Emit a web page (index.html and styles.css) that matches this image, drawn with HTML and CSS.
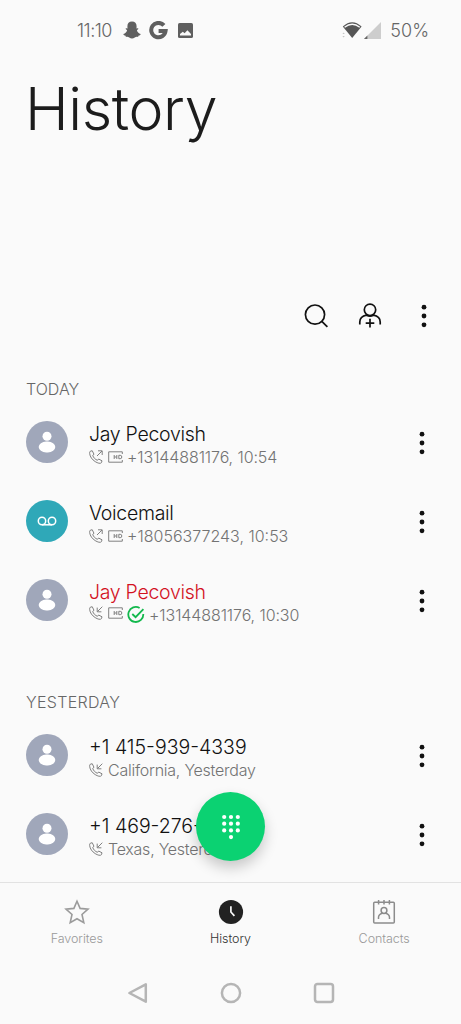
FILE: index.html
```html
<!DOCTYPE html>
<html lang="en">
<head>
    <meta charset="UTF-8">
    <meta name="viewport" content="width=device-width, initial-scale=1.0">
    <title>History</title>
    <link rel="stylesheet" href="styles.css">
</head>
<body>

    <!-- shared icons -->
    <svg class="sprite" width="0" height="0">
        <symbol id="person" viewBox="0 0 42 42">
            <circle cx="21" cy="15.3" r="4.5" fill="#fff"/>
            <rect x="12.7" y="20.6" width="16.6" height="10.8" rx="7.5" ry="5.4" fill="#fff"/>
        </symbol>
        <symbol id="dots" viewBox="0 0 6 24">
            <circle cx="3" cy="3.2" r="2.4"/>
            <circle cx="3" cy="12" r="2.4"/>
            <circle cx="3" cy="20.8" r="2.4"/>
        </symbol>
        <symbol id="handset" viewBox="0 0 14 14">
            <path d="M1.2 1.3 L3.2 .7 L5 4.3 L3.7 5.4 C4.4 7.6 6.2 9.5 8.5 10.3 L9.6 9 L13 10.8 L12.5 12.6 C11.5 14 8.7 13.2 6.2 11.6 C3.1 9.6 1 6.7 .7 3.7 C.5 2.5 .7 1.7 1.2 1.3 Z"/>
        </symbol>
        <symbol id="call-out" viewBox="0 0 14 14">
            <use href="#handset"/>
            <path d="M8 6 L13 1 M9 .8 H13.2 V5"/>
        </symbol>
        <symbol id="call-in" viewBox="0 0 14 14">
            <use href="#handset"/>
            <path d="M13.3 .7 L8.4 5.6 M8.2 1.6 V5.8 H12.4"/>
        </symbol>
        <symbol id="hd" viewBox="0 0 15 12">
            <path d="M14.3 3 V.8 H.7 V11.2 H14.3 V9"/>
            <path d="M6.2 4 V8 M8.8 4 V8 M6.2 6 H8.8 M10.8 4.3 V7.7 H12.2 Q13.8 7.7 13.8 6 Q13.8 4.3 12.2 4.3 Z"/>
        </symbol>
    </svg>

    <div class="screen">
        <div class="status-bar">
            <div class="status-left">
                <span class="clock">11:10</span>
                <svg class="snap" width="18" height="18" viewBox="0 0 18 18">
                    <path d="M9 .6 C12 .6 13.6 2.6 13.6 5.2 L13.5 7.4 C14 7.7 14.7 7.1 15.1 7.3 C16 7.9 14.6 8.7 13.9 9.1 C14.2 11.1 15.7 12.6 17.6 13.1 C17.9 14 16.8 14.5 15.4 14.8 L15.1 15.9 C13.6 15.6 12.8 15.7 11.8 16.4 C10 17.7 8 17.7 6.2 16.4 C5.2 15.7 4.4 15.6 2.9 15.9 L2.6 14.8 C1.2 14.5 .1 14 .4 13.1 C2.3 12.6 3.8 11.1 4.1 9.1 C3.4 8.7 2 7.9 2.9 7.3 C3.3 7.1 4 7.7 4.5 7.4 L4.4 5.2 C4.4 2.6 6 .6 9 .6 Z"/>
                </svg>
                <svg class="google" width="19" height="19" viewBox="0 0 19 19">
                    <path d="M14.9 4.4 A7.2 7.2 0 1 0 16.6 9.9 H9.6" fill="none" stroke="#5f5f5f" stroke-width="4"/>
                </svg>
                <svg class="photo" width="15" height="15" viewBox="0 0 15 15">
                    <rect width="15" height="15" rx="1.6"/>
                    <path d="M2 12.4 V11 L4.8 8.8 L6.6 10.3 L9.4 7.2 L13 11 V12.4 Z" fill="#fafafa"/>
                </svg>
            </div>
            <div class="status-right">
                <svg class="wifi" width="20" height="18" viewBox="0 0 20 18">
                    <path d="M.8 5.6 Q10.2 -3 19.6 5.6 L10.2 17 Z" fill="#555"/>
                    <path d="M2.6 6.3 Q10.2 .2 17.8 6.3" fill="none" stroke="#fafafa" stroke-width="1.3"/>
                    <path d="M.4 13 H2.8 L1.6 11.4 Z M.4 15 H2.8 L1.6 16.6 Z" fill="#c4c4c4"/>
                </svg>
                <svg class="signal" width="17" height="17" viewBox="0 0 17 17">
                    <path d="M0 17 L17 0 V17 Z" fill="#cdcdcd"/>
                    <path d="M0 17 L3.4 13.6 V17 Z" fill="#666"/>
                </svg>
                <span class="battery">50%</span>
            </div>
        </div>

        <div class="header">
            <h1>History</h1>
        </div>

        <div class="toolbar">
            <svg class="tool" width="26" height="26" viewBox="0 0 26 26">
                <circle cx="12" cy="11.6" r="9.6"/>
                <path d="M18.8 18.4 L24.4 23.8"/>
            </svg>
            <svg class="tool" width="26" height="26" viewBox="0 0 26 26">
                <circle cx="13" cy="6.8" r="5.7"/>
                <path d="M2.8 21.6 V19 C2.8 14.5 6.6 12.8 9.6 12.2 C12 13.5 14 13.5 16.4 12.2 C19.4 12.8 23.2 14.5 23.2 19 V21.6"/>
                <path d="M13 15.8 V24.6 M8.7 20.2 H17.3"/>
            </svg>
            <svg class="more" width="6" height="24"><use href="#dots"/></svg>
        </div>

        <div class="history">
            <div class="section">
                <h2 class="today">TODAY</h2>
                <div class="call">
                    <div class="avatar"><svg width="42" height="42"><use href="#person"/></svg></div>
                    <div class="info">
                        <div class="name">Jay Pecovish</div>
                        <div class="detail">
                            <svg class="line" width="14" height="14"><use href="#call-out"/></svg>
                            <svg class="line hd" width="15" height="12"><use href="#hd"/></svg>
                            <span class="phone">+13144881176, 10:54</span>
                        </div>
                    </div>
                    <svg class="more" width="6" height="24"><use href="#dots"/></svg>
                </div>
                <div class="call">
                    <div class="avatar voicemail">
                        <svg width="42" height="42" viewBox="0 0 42 42">
                            <g fill="none" stroke="#fff" stroke-width="1.5">
                                <circle cx="16" cy="21" r="3.7"/>
                                <circle cx="26" cy="21" r="3.7"/>
                                <path d="M16 24.8 H26"/>
                            </g>
                        </svg>
                    </div>
                    <div class="info">
                        <div class="name">Voicemail</div>
                        <div class="detail">
                            <svg class="line" width="14" height="14"><use href="#call-out"/></svg>
                            <svg class="line hd" width="15" height="12"><use href="#hd"/></svg>
                            <span>+18056377243, 10:53</span>
                        </div>
                    </div>
                    <svg class="more" width="6" height="24"><use href="#dots"/></svg>
                </div>
                <div class="call">
                    <div class="avatar"><svg width="42" height="42"><use href="#person"/></svg></div>
                    <div class="info">
                        <div class="name missed">Jay Pecovish</div>
                        <div class="detail">
                            <svg class="line up" width="14" height="14"><use href="#call-in"/></svg>
                            <svg class="line hd up" width="15" height="12"><use href="#hd"/></svg>
                            <svg class="verified" width="18" height="18" viewBox="0 0 18 18">
                                <path d="M12.6 2 A7.5 7.5 0 1 0 16.3 8"/>
                                <path d="M5.3 8 L8.6 11.2 L16.4 3.2"/>
                            </svg>
                            <span class="phone">+13144881176, 10:30</span>
                        </div>
                    </div>
                    <svg class="more" width="6" height="24"><use href="#dots"/></svg>
                </div>
            </div>

            <div class="section">
                <h2 class="yesterday">YESTERDAY</h2>
                <div class="call">
                    <div class="avatar"><svg width="42" height="42"><use href="#person"/></svg></div>
                    <div class="info">
                        <div class="name number">+1 415-939-4339</div>
                        <div class="detail">
                            <svg class="line" width="14" height="14"><use href="#call-in"/></svg>
                            <span class="place">California, Yesterday</span>
                        </div>
                    </div>
                    <svg class="more" width="6" height="24"><use href="#dots"/></svg>
                </div>
                <div class="call">
                    <div class="avatar"><svg width="42" height="42"><use href="#person"/></svg></div>
                    <div class="info">
                        <div class="name number">+1 469-276-</div>
                        <div class="detail">
                            <svg class="line" width="14" height="14"><use href="#call-in"/></svg>
                            <span class="place">Texas, Yesterday</span>
                        </div>
                    </div>
                    <svg class="more" width="6" height="24"><use href="#dots"/></svg>
                </div>
            </div>
        </div>

        <div class="dialpad">
            <svg width="20" height="26" viewBox="0 0 20 26" fill="#fff">
                <circle cx="3.2" cy="3" r="2.1"/><circle cx="10" cy="3" r="2.1"/><circle cx="16.8" cy="3" r="2.1"/>
                <circle cx="3.2" cy="9.7" r="2.1"/><circle cx="10" cy="9.7" r="2.1"/><circle cx="16.8" cy="9.7" r="2.1"/>
                <circle cx="3.2" cy="16.4" r="2.1"/><circle cx="10" cy="16.4" r="2.1"/><circle cx="16.8" cy="16.4" r="2.1"/>
                <circle cx="10" cy="23.1" r="2.1"/>
            </svg>
        </div>

        <div class="tabs">
            <div class="tab">
                <svg width="26" height="26" viewBox="0 0 26 26" fill="none" stroke="#9b9b9b" stroke-width="1.6">
                    <path d="M13 2.3 L16.1 9.4 L24 10.2 L18 15.5 L19.8 23.6 L13 19.7 L6.2 23.6 L8 15.5 L2 10.2 L9.9 9.4 Z"/>
                </svg>
                <span>Favorites</span>
            </div>
            <div class="tab active">
                <svg width="26" height="26" viewBox="0 0 26 26">
                    <circle cx="13" cy="13" r="12.1" fill="#222"/>
                    <path d="M12.9 7.2 V13 L16.4 16.8" fill="none" stroke="#fafafa" stroke-width="1.7"/>
                </svg>
                <span>History</span>
            </div>
            <div class="tab">
                <svg width="26" height="26" viewBox="0 0 26 26" fill="none" stroke="#8c8c8c" stroke-width="1.5">
                    <rect x="2.7" y="3.3" width="20.6" height="20.8" rx="1"/>
                    <path d="M7.6 1 V5.6 M13 1 V5.6 M18.4 1 V5.6"/>
                    <circle cx="13" cy="11.5" r="2.9"/>
                    <path d="M7.5 20 V18.4 C7.5 15.8 9.4 14.8 11.4 14.2 M18.5 20 V18.4 C18.5 15.8 16.6 14.8 14.6 14.2"/>
                </svg>
                <span>Contacts</span>
            </div>
        </div>

        <div class="nav-bar">
            <svg width="22" height="22" viewBox="0 0 22 22"><path d="M18.8 2.3 V19.7 L2.4 11 Z"/></svg>
            <svg width="22" height="22" viewBox="0 0 22 22"><circle cx="11" cy="11" r="9.1"/></svg>
            <svg width="22" height="22" viewBox="0 0 22 22"><rect x="2" y="2" width="18" height="18" rx="2.4"/></svg>
        </div>
    </div>

</body>
</html>
```
FILE: styles.css
```css
* {
    box-sizing: border-box;
    margin: 0;
    padding: 0;
}
body {
    font-family: Inter, 'Liberation Sans', sans-serif;
    font-weight: 300;
    background-color: #fafafa;
    color: #1c1c1c;
}
svg {
    display: block;
    flex-shrink: 0;
}
.sprite {
    position: absolute;
}
.screen {
    position: relative;
    width: 461px;
    height: 1024px;
    display: flex;
    flex-direction: column;
    overflow: hidden;
    white-space: nowrap;
}
.status-bar {
    height: 60px;
    padding: 0 32px 0 77px;
    display: flex;
    justify-content: space-between;
    align-items: center;
    font-size: 18px;
    color: #666;
    fill: #5f5f5f;
}
.status-left, .status-right {
    display: flex;
    align-items: center;
}
.clock {
    width: 46px;
    letter-spacing: -0.5px;
}
.google {
    margin: 0 10px 0 8px;
}
.signal {
    margin: 0 9px 0 2px;
}
.header {
    height: 226px;
    padding: 13px 25px 0;
}
h1 {
    font-size: 59px;
    line-height: 72px;
    font-weight: 300;
    letter-spacing: -0.4px;
}
.toolbar {
    height: 60px;
    padding-right: 34px;
    display: flex;
    justify-content: flex-end;
    align-items: center;
    gap: 28px;
}
.tool {
    fill: none;
    stroke: #111;
    stroke-width: 1.7;
}
.toolbar .more {
    margin-left: 10px;
}
.more {
    fill: #111;
}
.history {
    height: 536px;
    padding: 33px 36px 0 25px;
    overflow: hidden;
}
.section {
    margin-bottom: 52px;
}
h2 {
    padding-left: 1px;
    font-size: 16px;
    line-height: 20px;
    font-weight: 300;
    color: #666;
    margin-bottom: 4px;
}
.yesterday {
    letter-spacing: 0.3px;
}
.call {
    height: 79px;
    display: flex;
    align-items: center;
}
.avatar {
    width: 42px;
    height: 42px;
    border-radius: 50%;
    background-color: #a0a7ba;
    margin: 0 21px 1px 1px;
}
.voicemail {
    background-color: #2fa8b8;
}
.info {
    flex: 1;
    padding-top: 5px;
}
.name {
    font-size: 19.5px;
    line-height: 24px;
    letter-spacing: -0.3px;
    color: #111;
}
.number {
    letter-spacing: 0;
}
.missed {
    color: #d3121f;
}
.detail {
    height: 23px;
    display: flex;
    align-items: center;
    font-size: 16px;
    color: #737373;
}
.phone {
    letter-spacing: -0.1px;
}
.place {
    letter-spacing: -0.25px;
}
.line {
    fill: none;
    stroke: #808080;
    stroke-width: 1;
    margin-right: 5px;
}
.hd {
    margin-right: 4px;
}
.up {
    margin-bottom: 4px;
}
.verified {
    fill: none;
    stroke: #12b84c;
    stroke-width: 1.8;
    margin-right: 4px;
}
.dialpad {
    position: absolute;
    left: 196px;
    top: 792px;
    width: 69px;
    height: 69px;
    border-radius: 50%;
    background-color: #0bd272;
    box-shadow: 0 7px 14px rgba(0, 0, 0, 0.2);
    display: flex;
    justify-content: center;
    align-items: center;
}
.tabs {
    height: 80px;
    border-top: 1px solid #e2e2e2;
    padding-top: 16px;
    display: flex;
}
.tab {
    flex: 1;
    display: flex;
    flex-direction: column;
    align-items: center;
    font-size: 12.5px;
    line-height: 27px;
    color: #999;
}
.tab span {
    letter-spacing: -0.05px;
}
.active {
    color: #333;
}
.nav-bar {
    height: 62px;
    display: flex;
    justify-content: center;
    align-items: center;
    gap: 71px;
    fill: none;
    stroke: #b5b5b5;
    stroke-width: 2.5;
    stroke-linejoin: round;
}
```
